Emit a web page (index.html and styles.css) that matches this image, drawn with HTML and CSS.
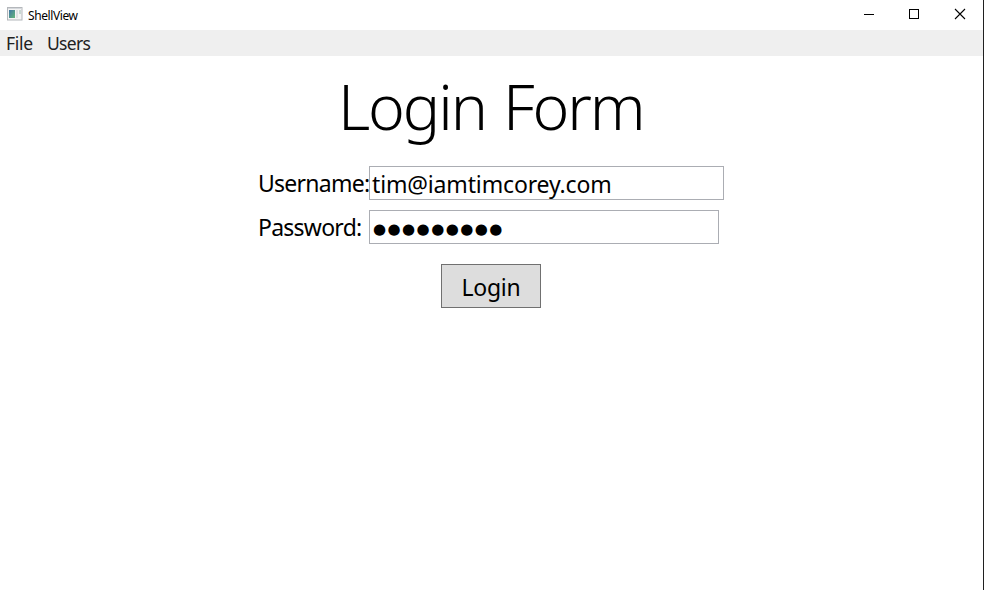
FILE: index.html
```html
<!DOCTYPE html>
<html lang="en">
<head>
<meta charset="utf-8">
<title>ShellView</title>
<link rel="stylesheet" href="styles.css">
</head>
<body>
<div class="window">
  <header class="titlebar">
    <svg class="app-icon" width="16" height="14" viewBox="0 0 16 14">
      <defs><linearGradient id="pane" x1="0" y1="0" x2="1" y2="1"><stop offset="0" stop-color="#3f75a5"/><stop offset="1" stop-color="#65b879"/></linearGradient></defs>
      <rect x=".5" y=".5" width="14.500" height="12.500" fill="#f4f4f4" stroke="#b4b7bb"/>
      <path d="M1 1.500h13" stroke="#d5d8dc"/>
      <rect x="2" y="3" width="6" height="8" fill="url(#pane)"/>
      <rect x="9" y="3" width="2" height="8" fill="#dfe1e3"/>
      <rect x="12" y="3" width="2" height="4" fill="#c8d8d2"/>
    </svg>
    <span class="caption">ShellView</span>
    <div class="controls">
      <svg width="46" height="30" viewBox="0 0 46 30"><path d="M18 14.500h10" stroke="#000"/></svg>
      <svg width="46" height="30" viewBox="0 0 46 30"><rect x="18.500" y="9.500" width="9" height="9" fill="none" stroke="#000"/></svg>
      <svg width="46" height="30" viewBox="0 0 46 30"><path d="M18 9l10 10M28 9L18 19" stroke="#000" stroke-width="1.1"/></svg>
    </div>
  </header>
  <nav class="menu"><span class="file">File</span><span class="users">Users</span></nav>
  <main>
    <h1><span>Login Form</span></h1>
    <form class="form">
      <div class="row"><label class="user-label">Username:</label><div class="field user">tim@iamtimcorey.com</div></div>
      <div class="row"><label class="pass-label">Password:</label><div class="field pass">●●●●●●●●●</div></div>
      <button type="button"><span>Login</span></button>
    </form>
  </main>
</div>
</body>
</html>
```
FILE: styles.css
```css
* { box-sizing: border-box; }
body { margin: 0; background: #fff; color: #000; font-family: "Noto Sans", "Open Sans", sans-serif; }
.window { height: 590px; border-right: 1px solid #202020; overflow: hidden; white-space: nowrap; }
.titlebar { height: 30px; display: flex; align-items: center; padding-left: 7px; }
.app-icon { margin: -2px 5px 0 0; }
.caption { font-size: 12px; letter-spacing: -0.4px; }
.controls { display: flex; margin-left: auto; }
.controls svg { display: block; }
.controls svg:nth-child(2) { margin-left: -1px; }
.menu { height: 26px; background: #efefef; display: flex; padding-left: 6px; font-size: 17.5px; line-height: 26px; color: #212121; }
.file { width: 41px; letter-spacing: -0.3px; }
.users { letter-spacing: -0.7px; }
h1 { margin: 0; height: 110px; padding-left: 338px; font-size: 62.5px; line-height: 99px; font-weight: 300; letter-spacing: -2.1px; word-spacing: 3px; }
.form { padding-left: 258px; font-size: 23px; }
.row { display: flex; height: 34px; margin-bottom: 10px; }
.row label { width: 111px; line-height: 34px; letter-spacing: -0.75px; }
.field { height: 34px; border: 1px solid #abadb3; padding-left: 2px; line-height: 34px; letter-spacing: -0.15px; }
.user { width: 355px; }
.pass { width: 350px; padding-left: 3px; font-family: "DejaVu Sans", sans-serif; font-size: 15px; letter-spacing: 1.45px; line-height: 36px; }
button { display: block; width: 100px; height: 44px; margin: 20px 0 0 183px; padding: 0; border: 1px solid #707070; background: #ddd; color: #000; font: 23px/45px "Noto Sans", sans-serif; letter-spacing: -0.3px; }
```
